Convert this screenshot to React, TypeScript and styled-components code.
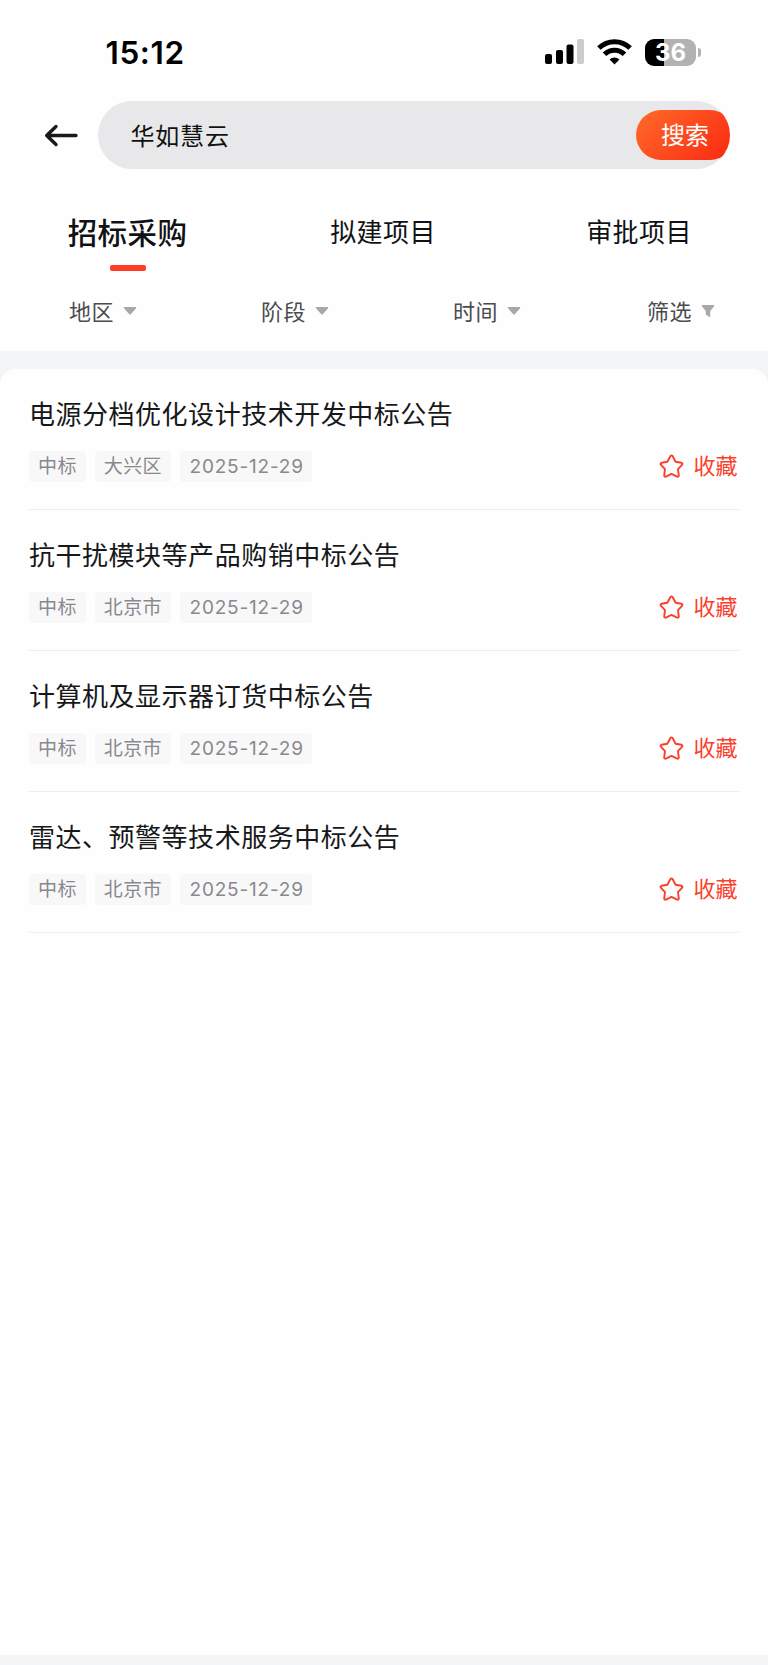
import React from "react";
import styled, { createGlobalStyle } from "styled-components";

const GlobalStyle = createGlobalStyle`
  * { box-sizing: border-box; }
  body {
    margin: 0;
    background: #f4f5f7;
    font-family: Inter, "Noto Sans CJK SC", sans-serif;
    color: #17181a;
  }
  button { border: 0; background: none; padding: 0; font: inherit; color: inherit; }
`;

const Screen = styled.div`
  width: 768px;
  height: 1665px;
  display: flex;
  flex-direction: column;
`;

const Header = styled.header`
  height: 351px;
  background: #fefefe;
  display: flex;
  flex-direction: column;
`;

const StatusBar = styled.div`
  height: 101px;
  padding: 3px 67px 0 105.5px;
  display: flex;
  align-items: center;
  justify-content: space-between;
`;

const Clock = styled.span`
  padding-top: 1px;
  font-size: 31.5px;
  font-weight: 600;
  line-height: 38px;
  letter-spacing: 0.6px;
  color: #000;
`;

const StatusIcons = styled.div`
  display: flex;
  align-items: center;
`;

const SearchRow = styled.div`
  height: 68px;
  padding: 0 38px 0 44px;
  display: flex;
  align-items: center;
`;

const BackButton = styled.button`
  width: 54px;
  display: flex;
`;

const SearchBox = styled.div`
  flex: 1;
  height: 68px;
  border-radius: 34px;
  background: #e8e8ea;
  overflow: hidden;
  display: flex;
  align-items: center;
  justify-content: space-between;
  padding-left: 32.5px;
`;

const Query = styled.span`
  padding-bottom: 1px;
  font-size: 24px;
  letter-spacing: 0.8px;
  color: #111;
`;

const SearchButton = styled.button`
  && {
    width: 99px;
    height: 50px;
    margin-right: -5px;
    padding-bottom: 4px;
    padding-right: 1px;
    border-radius: 25px;
    background: linear-gradient(135deg, #ff6729 5%, #fa2b12 95%);
    color: #fff;
    font-size: 24px;
  }
`;

const Tabs = styled.nav`
  height: 102px;
  padding-top: 44px;
  display: grid;
  grid-template-columns: repeat(3, 1fr);
`;

const Tab = styled.div<{ $active?: boolean }>`
  display: flex;
  flex-direction: column;
  align-items: center;
  padding-right: ${(p) => (p.$active ? 0 : 1)}px;
  font-size: ${(p) => (p.$active ? 29.5 : 26)}px;
  font-weight: ${(p) => (p.$active ? 500 : 400)};
  letter-spacing: ${(p) => (p.$active ? 0.4 : 0.4)}px;
  line-height: 40px;
  color: #111214;
`;

const TabLabel = styled.span`
  padding-right: 1px;
`;

const Underline = styled.i`
  width: 36px;
  height: 6px;
  margin-top: 12px;
  border-radius: 2px;
  background: #ff3b26;
`;

const Filters = styled.div`
  height: 80px;
  padding-bottom: 1px;
  display: grid;
  grid-template-columns: repeat(4, 1fr);
`;

const Filter = styled.div<{ $shift?: number }>`
  display: flex;
  align-items: center;
  gap: 9px;
  padding-left: ${(p) => 69 + (p.$shift ?? 0)}px;
  font-size: 22px;
  letter-spacing: 0.4px;
  color: #4b4c50;
`;

const Card = styled.main`
  height: 1286px;
  margin-top: 18px;
  padding: 0 29px;
  border-radius: 16px 16px 0 0;
  background: #fefefe;
`;

const Notice = styled.article`
  height: 141px;
  padding-top: 28px;
  border-bottom: 1.5px solid #eeeeef;
`;

const Title = styled.h2`
  margin: 0;
  font-size: 26px;
  font-weight: 400;
  line-height: 36px;
  letter-spacing: 0.52px;
`;

const Meta = styled.div`
  height: 31px;
  margin-top: 18px;
  display: flex;
  align-items: center;
  gap: 9px;
`;

const Tag = styled.span<{ $date?: boolean }>`
  height: 31px;
  padding: 0 ${(p) => (p.$date ? 8.5 : 9)}px 0 ${(p) => (p.$date ? 9.5 : 9)}px;
  border-radius: 4px;
  background: #f8f8f9;
  color: #88898d;
  font-size: 19px;
  line-height: 32px;
  letter-spacing: ${(p) => (p.$date ? 0.8 : 0.4)}px;
`;

const Favorite = styled.button`
  && {
    margin-left: auto;
    margin-right: 1.5px;
    display: flex;
    align-items: center;
    gap: 9.5px;
    color: #fc3f2b;
    font-size: 22px;
    line-height: 31px;
  }
`;

const FavoriteLabel = styled.span`
  padding-bottom: 1px;
`;

const FilterLabel = styled.span`
  padding-bottom: 2px;
`;

const Signal = () => (
  <svg width="40" height="26" viewBox="0 0 40 26">
    <rect x="0" y="15" width="7" height="10" rx="2" />
    <rect x="11" y="11" width="7" height="14" rx="2" />
    <rect x="21.5" y="5.500" width="7" height="19.500" rx="2" />
    <rect x="32" y="0" width="7" height="25" rx="2" fill="#ccc" />
  </svg>
);

const Wifi = () => (
  <svg width="35" height="26" viewBox="0 0 35 26" fill="none" stroke="#000" strokeWidth="5">
    <path d="M1.900 9a22.300 22.300 0 0 1 31.200 0" />
    <path d="M7.500 15.300a14.200 14.200 0 0 1 20 0" />
    <path d="M17.500 25.500l-4.900-5a6.800 6.800 0 0 1 9.800 0z" fill="#000" stroke="none" />
  </svg>
);

const BatteryBody = styled.span`
  width: 51px;
  height: 27px;
  border-radius: 9px;
  background: linear-gradient(90deg, #000 37%, #b2b2b2 37%);
  color: #fff;
  font-size: 24px;
  font-weight: 700;
  line-height: 27px;
  text-align: center;
`;

const BatteryCap = styled.span`
  width: 3px;
  height: 9px;
  margin-left: 2px;
  border-radius: 0 4px 4px 0;
  background: #b2b2b2;
`;

const Gap = styled.span<{ $w: number }>`
  width: ${(p) => p.$w}px;
`;

const BackArrow = () => (
  <svg width="35" height="24" viewBox="0 0 35 24" fill="none" stroke="#17191b" strokeWidth="3.400" strokeLinecap="round" strokeLinejoin="round">
    <path d="M32 12.500H2.700M12 3.500 L2.700 12.500l9.300 9" />
  </svg>
);

const Caret = () => (
  <svg width="14" height="10" viewBox="0 0 14 10" fill="#a7a8ac">
    <path d="M1.300 1h11.400q1 .4.300 1.200L8 7.900q-1 1-2 0L1 2.200Q.3 1.400 1.300 1z" />
  </svg>
);

const Funnel = () => (
  <svg width="14" height="14" viewBox="0 0 14 14" fill="#a7a8ac">
    <path d="M1.300 1h11.400q1 .4.400 1.300L9.200 7v5.300q-.2.900-1 .5L5.400 11q-.6-.3-.6-1V7L.9 2.300Q.3 1.400 1.300 1z" />
  </svg>
);

const Star = () => (
  <svg width="25" height="25" viewBox="0 0 25 25" fill="none" stroke="#fc3f2b" strokeWidth="1.900" strokeLinejoin="round">
    <path d="M11.300 2.200q1.200-1.300 2.400 0l2.900 5.500 5.900 1.100q1.500.6.700 1.900l-4.200 4.500.8 6.300q-.2 1.500-1.700 1.100l-5.600-2.700-5.600 2.700q-1.500.4-1.700-1.100l.8-6.300-4.200-4.500q-.8-1.300.7-1.900l5.900-1.100z" />
  </svg>
);

const notices = [
  { title: "电源分档优化设计技术开发中标公告", region: "大兴区" },
  { title: "抗干扰模块等产品购销中标公告", region: "北京市" },
  { title: "计算机及显示器订货中标公告", region: "北京市" },
  { title: "雷达、预警等技术服务中标公告", region: "北京市" },
];

export default function App() {
  return (
    <Screen>
      <GlobalStyle />
      <Header>
        <StatusBar>
          <Clock>15:12</Clock>
          <StatusIcons>
            <Signal />
            <Gap $w={12} />
            <Wifi />
            <Gap $w={13} />
            <BatteryBody>36</BatteryBody>
            <BatteryCap />
          </StatusIcons>
        </StatusBar>
        <SearchRow>
          <BackButton aria-label="返回"><BackArrow /></BackButton>
          <SearchBox>
            <Query>华如慧云</Query>
            <SearchButton>搜索</SearchButton>
          </SearchBox>
        </SearchRow>
        <Tabs>
          <Tab $active><TabLabel>招标采购</TabLabel><Underline /></Tab>
          <Tab><TabLabel>拟建项目</TabLabel></Tab>
          <Tab><TabLabel>审批项目</TabLabel></Tab>
        </Tabs>
        <Filters>
          <Filter><FilterLabel>地区</FilterLabel><Caret /></Filter>
          <Filter><FilterLabel>阶段</FilterLabel><Caret /></Filter>
          <Filter><FilterLabel>时间</FilterLabel><Caret /></Filter>
          <Filter $shift={2}><FilterLabel>筛选</FilterLabel><Funnel /></Filter>
        </Filters>
      </Header>
      <Card>
        {notices.map((n) => (
          <Notice key={n.title}>
            <Title>{n.title}</Title>
            <Meta>
              <Tag>中标</Tag>
              <Tag>{n.region}</Tag>
              <Tag $date>2025-12-29</Tag>
              <Favorite><Star /><FavoriteLabel>收藏</FavoriteLabel></Favorite>
            </Meta>
          </Notice>
        ))}
      </Card>
    </Screen>
  );
}
